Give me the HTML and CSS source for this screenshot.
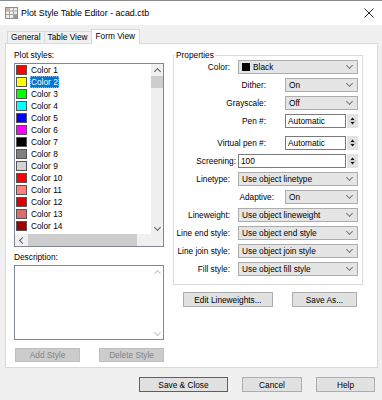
FILE: index.html
```html
<!DOCTYPE html>
<html lang="en">

<head>
    <meta charset="UTF-8">
    <meta name="viewport" content="width=device-width, initial-scale=1.0">
    <title>Plot Style Table Editor - acad.ctb</title>
    <link rel="stylesheet" href="styles.css">
</head>

<body>
    <div class="window">
        <div class="titlebar">
            <svg class="app-icon" width="13" height="12" viewBox="0 0 13 12">
                <rect x="0.5" y="0.5" width="12" height="11" fill="#ececec" stroke="#8c8c8c" />
                <path d="M1 4h11M1 7.5h11M4.5 1v10M8.5 1v10" stroke="#a8a8a8" />
                <rect x="1" y="1" width="3.5" height="3" fill="#c9b59a" />
                <rect x="9" y="8" width="3" height="3" fill="#9a9a9a" />
            </svg>
            <span class="title">Plot Style Table Editor - acad.ctb</span>
            <svg class="close" width="10" height="10" viewBox="0 0 10 10">
                <path d="M0.5 0.5L9.5 9.5M9.5 0.5L0.5 9.5" stroke="#111" stroke-width="0.9" />
            </svg>
        </div>

        <div class="tabs">
            <div class="tab">General</div>
            <div class="tab">Table View</div>
            <div class="tab active">Form View</div>
        </div>

        <div class="panel">
            <div class="left">
                <label class="caption">Plot styles:</label>
                <div class="listbox">
                    <ul class="items">
                        <li><span class="swatch" style="background:#ff0000"></span><span class="name">Color 1</span></li>
                        <li><span class="swatch" style="background:#ffff00"></span><span class="name selected">Color 2</span></li>
                        <li><span class="swatch" style="background:#00ff00"></span><span class="name">Color 3</span></li>
                        <li><span class="swatch" style="background:#00ffff"></span><span class="name">Color 4</span></li>
                        <li><span class="swatch" style="background:#0000ff"></span><span class="name">Color 5</span></li>
                        <li><span class="swatch" style="background:#ff00ff"></span><span class="name">Color 6</span></li>
                        <li><span class="swatch" style="background:#000000"></span><span class="name">Color 7</span></li>
                        <li><span class="swatch" style="background:#808080"></span><span class="name">Color 8</span></li>
                        <li><span class="swatch" style="background:#d3d3d3"></span><span class="name">Color 9</span></li>
                        <li><span class="swatch" style="background:#ff0000"></span><span class="name">Color 10</span></li>
                        <li><span class="swatch" style="background:#ff7f7f"></span><span class="name">Color 11</span></li>
                        <li><span class="swatch" style="background:#dd0000"></span><span class="name">Color 12</span></li>
                        <li><span class="swatch" style="background:#d96c6c"></span><span class="name">Color 13</span></li>
                        <li><span class="swatch" style="background:#a50000"></span><span class="name">Color 14</span></li>
                    </ul>
                    <div class="vscroll">
                        <div class="arrow up"></div>
                        <div class="thumb"></div>
                        <div class="arrow down push"></div>
                    </div>
                    <div class="hscroll">
                        <div class="arrow left"></div>
                        <div class="thumb"></div>
                        <div class="arrow right push"></div>
                    </div>
                    <div class="corner"></div>
                </div>

                <label class="caption desc-caption">Description:</label>
                <div class="desc">
                    <div class="desc-text"></div>
                    <div class="vscroll disabled">
                        <div class="arrow up"></div>
                        <div class="arrow down push"></div>
                    </div>
                </div>

                <div class="style-buttons">
                    <button class="btn" disabled>Add Style</button>
                    <button class="btn" disabled>Delete Style</button>
                </div>
            </div>

            <div class="right">
                <fieldset class="props">
                    <legend>Properties</legend>
                    <div class="rows">
                        <div class="row">
                            <label>Color:</label>
                            <div class="combo wide"><span class="color-chip"></span>Black</div>
                        </div>
                        <div class="row short">
                            <label>Dither:</label>
                            <div class="combo small">On</div>
                        </div>
                        <div class="row short">
                            <label>Grayscale:</label>
                            <div class="combo small">Off</div>
                        </div>
                        <div class="row short">
                            <label>Pen #:</label>
                            <div class="spin">
                                <div class="field small">Automatic</div>
                                <div class="spinner"><svg width="9" height="12" viewBox="0 0 9 12"><path d="M2.5 5L4.5 2.5L6.5 5Z M2.5 7L4.5 9.5L6.5 7Z" fill="#111" /><path d="M1 6h7" stroke="#b5b5b5" /></svg></div>
                            </div>
                        </div>
                        <div class="row short spaced">
                            <label>Virtual pen #:</label>
                            <div class="spin">
                                <div class="field small">Automatic</div>
                                <div class="spinner"><svg width="9" height="12" viewBox="0 0 9 12"><path d="M2.5 5L4.5 2.5L6.5 5Z M2.5 7L4.5 9.5L6.5 7Z" fill="#111" /><path d="M1 6h7" stroke="#b5b5b5" /></svg></div>
                            </div>
                        </div>
                        <div class="row tight">
                            <label>Screening:</label>
                            <div class="spin">
                                <div class="field wide">100</div>
                                <div class="spinner"><svg width="9" height="12" viewBox="0 0 9 12"><path d="M2.5 5L4.5 2.5L6.5 5Z M2.5 7L4.5 9.5L6.5 7Z" fill="#111" /><path d="M1 6h7" stroke="#b5b5b5" /></svg></div>
                            </div>
                        </div>
                        <div class="row">
                            <label>Linetype:</label>
                            <div class="combo wide">Use object linetype</div>
                        </div>
                        <div class="row adaptive">
                            <label>Adaptive:</label>
                            <div class="combo small">On</div>
                        </div>
                        <div class="row">
                            <label>Lineweight:</label>
                            <div class="combo wide">Use object lineweight</div>
                        </div>
                        <div class="row">
                            <label>Line end style:</label>
                            <div class="combo wide">Use object end style</div>
                        </div>
                        <div class="row">
                            <label>Line join style:</label>
                            <div class="combo wide">Use object join style</div>
                        </div>
                        <div class="row">
                            <label>Fill style:</label>
                            <div class="combo wide">Use object fill style</div>
                        </div>
                    </div>
                </fieldset>

                <div class="prop-buttons">
                    <button class="btn edit-lw">Edit Lineweights...</button>
                    <button class="btn save-as">Save As...</button>
                </div>
            </div>
        </div>

        <div class="footer">
            <button class="btn default save-close">Save &amp; Close</button>
            <button class="btn cancel">Cancel</button>
            <button class="btn help">Help</button>
        </div>
    </div>
</body>

</html>
```

FILE: styles.css
```css
* {
    box-sizing: border-box;
}

body {
    margin: 0;
    font-family: "Liberation Sans", Arial, sans-serif;
    font-size: 8.3px;
    color: #000;
    background: #f0f0f0;
}

.window {
    width: 382px;
    height: 400px;
    overflow: hidden;
    background: #f0f0f0;
    border-top: 1px solid #8c8c8c;
}

/* title bar */

.titlebar {
    height: 24px;
    display: flex;
    align-items: center;
    padding-left: 5px;
    background: #fff;
}

.app-icon {
    margin-right: 3px;
}

.title {
    flex: 1;
    font-size: 8.9px;
}

.close {
    margin-right: 8px;
}

/* tabs */

.tabs {
    height: 18px;
    display: flex;
    align-items: flex-end;
    padding-left: 7px;
}

.tab {
    height: 12px;
    line-height: 11px;
    padding: 0 3px;
    margin-right: -1px;
    background: #f0f0f0;
    border: 1px solid #d9d9d9;
    border-bottom: none;
}

.tab.active {
    position: relative;
    z-index: 1;
    height: 15px;
    line-height: 12px;
    margin-bottom: -1px;
    padding: 0 4px;
    background: #fff;
}

/* panel */

.panel {
    width: 373px;
    height: 325px;
    margin-left: 5px;
    display: flex;
    gap: 9px;
    padding: 6px 0 0 8px;
    background: #fff;
    border: 1px solid #d9d9d9;
}

.left {
    width: 150px;
    flex: none;
}

.caption {
    display: block;
    height: 10px;
    line-height: 10px;
}

.desc-caption {
    margin-top: 5px;
}

.listbox {
    margin-top: 3px;
    width: 150px;
    height: 184px;
    display: grid;
    grid-template-columns: 136px 12px;
    grid-template-rows: 170px 12px;
    overflow: hidden;
    border: 1px solid #828790;
}

.listbox > * {
    min-width: 0;
    min-height: 0;
}

.items {
    list-style: none;
    margin: 0;
    padding: 0;
    overflow: hidden;
}

.items li {
    height: 12px;
    display: flex;
    align-items: center;
    gap: 3px;
    padding-left: 1px;
}

.swatch {
    width: 11px;
    height: 10px;
    border: 1px solid #555;
}

.name {
    height: 12px;
    line-height: 12px;
    padding: 0 1px;
}

.name.selected {
    background: #0078d7;
    color: #fff;
    outline: 1px dotted #8fbbe6;
    outline-offset: -1px;
}

/* scrollbars */

.vscroll {
    display: flex;
    flex-direction: column;
    background: #f0f0f0;
}

.hscroll {
    display: flex;
    overflow: hidden;
    background: #f0f0f0;
}

.corner {
    background: #f0f0f0;
}

.arrow {
    width: 12px;
    height: 12px;
    display: flex;
    align-items: center;
    justify-content: center;
    flex: none;
}

.arrow::before {
    content: "";
    width: 4px;
    height: 4px;
    border-right: 1px solid #606060;
    border-bottom: 1px solid #606060;
}

.arrow.up::before {
    transform: translateY(1px) rotate(225deg);
}

.arrow.down::before {
    transform: translateY(-1px) rotate(45deg);
}

.arrow.left::before {
    transform: translateX(1px) rotate(135deg);
}

.arrow.right::before {
    transform: translateX(-1px) rotate(-45deg);
}

.push {
    margin-top: auto;
}

.hscroll .push {
    margin-top: 0;
    margin-left: auto;
}

.vscroll .thumb {
    height: 12px;
    flex: none;
    background: #cdcdcd;
}

.hscroll .thumb {
    width: 109px;
    flex: none;
    margin-left: 1px;
    background: #cdcdcd;
}

.vscroll.disabled {
    width: 12px;
    background: #fff;
}

.vscroll.disabled .arrow::before {
    border-color: #c4c4c4;
}

/* description */

.desc {
    margin-top: 3px;
    height: 75px;
    display: flex;
    background: #fff;
    border: 1px solid #828790;
}

.desc-text {
    flex: 1;
}

.style-buttons {
    margin-top: 8px;
    display: flex;
    justify-content: space-between;
    padding-left: 1px;
}

.style-buttons .btn {
    width: 65px;
    height: 14px;
}

/* properties */

.right {
    width: 190px;
    flex: none;
}

.props {
    margin: 0;
    min-width: 0;
    padding: 0 4px 8px 0;
    border: 1px solid #dcdcdc;
}

.props legend {
    margin-left: 1px;
    padding: 0 1px;
    line-height: 10px;
}

.rows {
    display: flex;
    flex-direction: column;
    gap: 4px;
}

.row {
    height: 14px;
    display: flex;
    justify-content: flex-end;
    align-items: center;
}

.row label {
    margin-right: 8px;
}

.row.short label {
    margin-right: 19px;
}

.row.tight label {
    margin-right: 2px;
}

.row.adaptive label {
    margin-right: 11px;
}

.row.spaced {
    margin-top: 4px;
}

.combo {
    height: 14px;
    display: flex;
    align-items: center;
    padding-left: 3px;
    background: #e5e5e5;
    border: 1px solid #acacac;
}

.combo::after {
    content: "";
    width: 4px;
    height: 4px;
    margin-left: auto;
    margin-right: 5px;
    margin-top: -3px;
    border-right: 1px solid #7a7a7a;
    border-bottom: 1px solid #7a7a7a;
    transform: rotate(45deg);
}

.combo.wide {
    width: 120px;
}

.combo.small {
    width: 73px;
}

.color-chip {
    width: 8px;
    height: 8px;
    margin-right: 3px;
    background: #000;
}

.spin {
    display: flex;
    gap: 1px;
}

.field {
    height: 14px;
    line-height: 12px;
    padding-left: 2px;
    background: #fff;
    border: 1px solid #7a7a7a;
}

.field.small {
    width: 61px;
}

.field.wide {
    width: 108px;
}

.spinner {
    width: 11px;
    height: 14px;
    display: flex;
    align-items: center;
    justify-content: center;
    background: #e3e3e3;
}

.prop-buttons {
    margin-top: 7px;
    display: flex;
    justify-content: space-between;
    padding: 0 6px 0 10px;
}

/* buttons */

.btn {
    height: 15px;
    padding: 0;
    font-family: inherit;
    font-size: 8.3px;
    color: #000;
    background: #e1e1e1;
    border: 1px solid #adadad;
}

.btn:disabled {
    color: #838383;
    background: #cccccc;
    border-color: #bfbfbf;
}

.btn.default {
    border-color: #0078d7;
}

.edit-lw {
    width: 90px;
}

.save-as {
    width: 65px;
}

.footer {
    margin-top: 9px;
    display: flex;
    justify-content: flex-end;
    gap: 14px;
    padding-right: 7px;
}

.save-close {
    width: 89px;
}

.cancel {
    width: 60px;
}

.help {
    width: 59px;
}
```
